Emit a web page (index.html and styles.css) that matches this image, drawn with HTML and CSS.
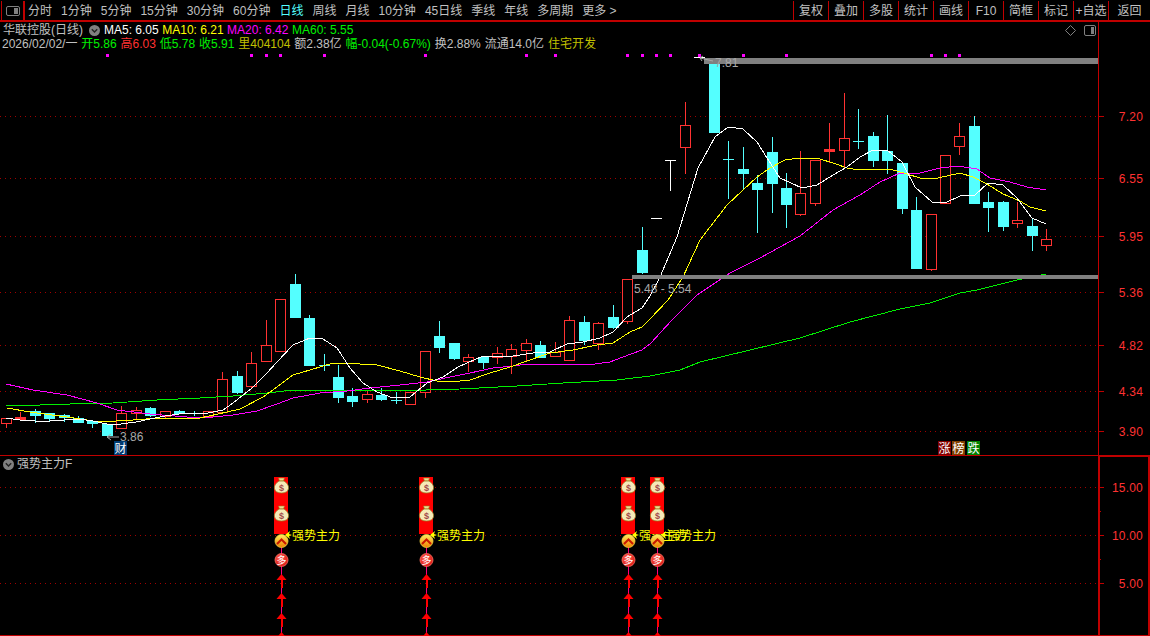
FILE: index.html
```html
<!DOCTYPE html>
<html lang="zh-CN">
<head>
<meta charset="utf-8">
<title>华联控股 (日线)</title>
<link rel="stylesheet" href="styles.css">
</head>
<body>
<div class="app">
  <header class="toolbar">
    <div class="tb-icon"><svg width="14" height="10" viewBox="0 0 14 10"><rect x="0.5" y="0.5" width="13" height="9" rx="1.5" class="ico-line"/><rect x="8" y="2" width="4" height="6" class="ico-fill"/></svg></div>
    <nav class="tb-tabs">
      <span>分时</span><span>1分钟</span><span>5分钟</span><span>15分钟</span><span>30分钟</span><span>60分钟</span><span class="active">日线</span><span>周线</span><span>月线</span><span>10分钟</span><span>45日线</span><span>季线</span><span>年线</span><span>多周期</span><span>更多 &gt;</span>
    </nav>
    <div class="tb-btns">
      <span>复权</span><span>叠加</span><span>多股</span><span>统计</span><span>画线</span><span>F10</span><span>简框</span><span>标记</span><span>+自选</span><span>返回</span>
    </div>
  </header>

  <section class="panel panel-main">
    <div class="head">
      <div class="row row-ma">
        <span class="gray name">华联控股(日线)</span>
        <svg class="chev" width="11" height="11" viewBox="0 0 11 11"><circle cx="5.5" cy="5.5" r="5.5" class="ico-fill"/><path d="M2.8 4.2 5.5 7 8.2 4.2" class="ico-dark"/></svg>
        <span class="white">MA5: 6.05</span>
        <span class="yellow">MA10: 6.21</span>
        <span class="magenta">MA20: 6.42</span>
        <span class="green">MA60: 5.55</span>
        <span class="head-icons">
          <svg width="11" height="11" viewBox="0 0 11 11"><path d="M5.5 0.5 10.5 5.5 5.5 10.5 0.5 5.5Z" class="ico-line"/></svg>
          <svg width="12" height="11" viewBox="0 0 12 11"><rect x="0.5" y="0.5" width="11" height="10" rx="1.5" class="ico-line"/><rect x="7" y="2" width="3" height="7" class="ico-fill"/></svg>
        </span>
      </div>
      <div class="row row-quote">
        <span class="gray">2026/02/02/一</span>
        <span class="green">开5.86</span>
        <span class="red">高6.03</span>
        <span class="green">低5.78</span>
        <span class="green">收5.91</span>
        <span class="olive">里404104</span>
        <span class="gray">额2.38亿</span>
        <span class="green">幅-0.04(-0.67%)</span>
        <span class="gray">换2.88%</span>
        <span class="gray">流通14.0亿</span>
        <span class="olive">住宅开发</span>
      </div>
    </div>
    <svg id="main" class="chart" width="1150" height="433" viewBox="0 22 1150 433"></svg>
  </section>

  <section class="panel panel-sub">
    <div class="sub-head">
      <svg width="11" height="11" viewBox="0 0 11 11"><circle cx="5.5" cy="5.5" r="5.5" class="ico-fill"/><path d="M2.8 4.2 5.5 7 8.2 4.2" class="ico-dark"/></svg>
      <span class="gray">强势主力F</span>
    </div>
    <svg id="sub" class="chart" width="1150" height="181" viewBox="0 455 1150 181">
      <defs>
        <linearGradient id="coinFill" x1="0" y1="0" x2="0" y2="1">
          <stop offset="0" stop-color="#fff060"/>
          <stop offset="1" stop-color="#f08000"/>
        </linearGradient>
        <radialGradient id="ballFill" cx="0.4" cy="0.35" r="0.75">
          <stop offset="0" stop-color="#ff6050"/>
          <stop offset="1" stop-color="#d81010"/>
        </radialGradient>
      </defs>
    </svg>
  </section>
</div>
<script src="app.js"></script>
</body>
</html>
```

FILE: styles.css
```css
* { box-sizing: border-box; }
html, body { margin: 0; padding: 0; background: #000; }
body { width: 1150px; height: 636px; overflow: hidden; font: 12px/14px "Liberation Sans", "Noto Sans CJK SC", sans-serif; color: #c0c0c0; }
.app { display: flex; flex-direction: column; width: 1150px; height: 636px; }

.toolbar { display: flex; align-items: stretch; height: 22px; flex: none; border-bottom: 2px solid #c00000; padding-top: 1px; }
.tb-icon { width: 24px; margin-left: 1px; border-left: 1px solid #c00000; border-right: 2px solid #c00000; display: flex; align-items: center; justify-content: center; }
.tb-tabs { display: flex; align-items: center; gap: 9px; padding-left: 3px; }
.tb-tabs .active { color: #54ffff; }
.tb-btns { margin-left: auto; width: 357px; display: flex; }
.tb-btns span { width: 35px; border-left: 1px solid #c00000; display: flex; align-items: center; justify-content: center; white-space: nowrap; }
.tb-btns span:last-child { width: 42px; }

.panel { position: relative; flex: none; }
.panel-main { height: 433px; }
.panel-sub { height: 181px; }
.chart { display: block; }

.head { position: absolute; left: 0; top: 1px; width: 1098px; }
.row { display: flex; align-items: center; height: 14px; white-space: nowrap; }
.row-ma { gap: 3.5px; padding-left: 3px; }
.row-ma .name { margin-right: 2px; }
.row-ma .chev { margin-right: 1px; }
.row-quote { gap: 3.9px; padding-left: 2px; }
.head-icons { margin-left: auto; display: flex; align-items: center; gap: 8px; padding-right: 2px; }
.sub-head { position: absolute; left: 3px; top: 2px; display: flex; align-items: center; gap: 3px; height: 14px; }

.gray { color: #c0c0c0; }
.white { color: #fff; }
.yellow { color: #ffff00; }
.magenta { color: #ff00ff; }
.green { color: #00f000; }
.red { color: #ff3232; }
.olive { color: #c0c000; }

.ico-line { fill: none; stroke: #808080; stroke-width: 1; }
.ico-fill { fill: #808080; }
.ico-dark { fill: none; stroke: #222; stroke-width: 1.4; }

.crisp { shape-rendering: crispEdges; }
.grid { stroke: #a00000; stroke-width: 1; stroke-dasharray: 1 4; }
.axis { stroke: #c00000; stroke-width: 1; }
.axis-thick { stroke: #c00000; stroke-width: 2; }
.ma { fill: none; stroke-width: 1; shape-rendering: crispEdges; }
.ma5 { stroke: #fff; }
.ma10 { stroke: #ffff00; }
.ma20 { stroke: #ff00ff; }
.ma60 { stroke: #00f000; }
.wick-r { stroke: #ff3232; }
.wick-c { stroke: #54ffff; }
.wick-w { stroke: #fff; }
.solid-r { fill: #ff3232; }
.solid-c { fill: #54ffff; }
.hollow { fill: #000; }
.dot { fill: #ff00ff; }
.band { fill: #808080; }
.note { fill: #a8a8a8; font-size: 12px; }
.arrow-note { stroke: #a8a8a8; fill: none; }
.ylabel { fill: #ff3232; font-size: 12px; text-anchor: end; letter-spacing: 0.2px; }
.badge-text { fill: #fff; font-size: 12px; text-anchor: middle; }
.bg-cai { fill: #003a70; }
.bg-zhang { fill: #800000; }
.bg-bang { fill: #804000; }
.bg-die { fill: #008000; }

.strip { fill: #ff0000; }
.stem { stroke: #ff0080; }
.up { fill: #ff0000; }
.bag { fill: #f6eab8; stroke: #9a7a20; stroke-width: 0.8; }
.bag-neck { fill: #f0dc90; stroke: #9a7a20; stroke-width: 0.6; }
.bag-sign { fill: #a04848; font-size: 9px; font-weight: bold; text-anchor: middle; }
.coin { fill: url(#coinFill); stroke: #f0d040; stroke-width: 0.8; }
.coin-mark { fill: none; stroke: #c81800; stroke-width: 2; }
.ball { fill: url(#ballFill); stroke: #ff7060; stroke-width: 0.8; }
.ball-text { fill: #fff; font-size: 10px; text-anchor: middle; }
.star { fill: #ffff00; }
.sig-text { fill: #ffff00; font-size: 12px; }
```

FILE: app.js
```js
var NS = "http://www.w3.org/2000/svg";
function el(parent, tag, attrs, text) {
  var n = document.createElementNS(NS, tag);
  for (var k in attrs) n.setAttribute(k, attrs[k]);
  if (text != null) n.textContent = text;
  parent.appendChild(n);
  return n;
}
var main = document.getElementById("main");
var sub = document.getElementById("sub");
var AX = 1098;
var cx = function (i) { return Math.floor(6.2 + 14.45 * i); };

// [high, bodyTop, bodyBottom, low, kind]  r hollow red, R solid red, c cyan, w white
var K = [
[418,418,423,428,"r"],[412,417,419,419,"R"],[409,411,415,423,"c"],[413,413,418,421,"c"],[414,415,417,422,"c"],
[416,418,422,423,"c"],[420,421,423,428,"c"],[424,424,435,435,"c"],[406,413,428,429,"r"],[407,410,413,419,"r"],
[407,408,415,417,"c"],[411,411,416,418,"r"],[410,411,413,414,"c"],[411,413,413,416,"c"],[411,411,416,416,"r"],
[372,379,412,412,"r"],[371,376,392,394,"c"],[352,363,386,388,"r"],[320,345,361,361,"r"],[299,299,351,351,"r"],
[274,284,317,317,"c"],[315,318,365,365,"c"],[354,365,365,371,"c"],[365,377,397,403,"c"],[388,396,401,407,"c"],
[391,394,399,403,"r"],[388,395,399,401,"c"],[392,400,400,404,"c"],[392,392,404,405,"r"],[351,351,392,398,"r"],
[321,336,347,353,"c"],[343,343,358,360,"c"],[354,357,361,372,"r"],[357,357,362,369,"c"],[347,353,357,364,"r"],
[344,349,356,374,"r"],[339,343,350,361,"r"],[341,345,357,357,"c"],[342,352,356,356,"r"],[316,320,360,360,"r"],
[316,322,340,345,"c"],[322,323,343,350,"r"],[305,317,327,329,"c"],[279,279,321,324,"r"],[227,250,272,274,"c"],
[218,218,218,218,"w"],[160,160,160,191,"w"],[102,125,147,174,"r"],[57,57,57,57,"w"],[58,60,132,132,"c"],
[141,159,159,199,"c"],[147,169,173,190,"c"],[175,183,189,233,"c"],[137,152,183,213,"c"],[173,188,204,228,"c"],
[151,193,214,216,"r"],[160,160,203,206,"r"],[123,149,151,163,"R"],[93,138,150,168,"r"],[109,141,141,149,"c"],
[132,136,160,167,"c"],[115,151,160,174,"c"],[163,163,208,214,"c"],[197,210,268,268,"c"],[214,214,269,271,"r"],
[155,155,203,203,"r"],[123,136,146,155,"r"],[116,126,203,203,"c"],[192,202,207,232,"c"],[201,202,226,231,"c"],
[202,220,223,228,"r"],[218,226,235,251,"c"],[229,239,245,251,"r"]
];

var MA5 = [[6,418],[20,420],[35,421],[50,421],[64,420],[78,419],[93,421],[107,424],[121,424],[136,422],[150,419],[165,416],[179,414],[194,413],[208,413],[223,410],[233,403],[252,388],[267,373],[277,362],[293,345],[310,338],[323,339],[337,348],[350,368],[363,383],[377,392],[393,398],[410,397],[427,383],[443,377],[458,367],[467,363],[483,356],[497,356],[513,356],[533,353],[550,352],[567,344],[583,342],[600,338],[613,332],[627,317],[642,308],[650,296],[660,277],[677,237],[698,168],[715,137],[728,127],[743,129],[757,142],[767,158],[780,178],[802,188],[817,185],[833,175],[847,167],[860,157],[873,150],[887,150],[902,162],[915,187],[932,202],[947,202],[960,196],[975,195],[988,183],[1003,185],[1017,198],[1032,218],[1046,224]];
var MA10 = [[7,408],[30,412],[67,417],[100,422],[133,420],[160,418],[200,418],[227,412],[240,409],[263,397],[277,387],[293,375],[310,370],[333,363],[360,364],[377,365],[400,371],[420,377],[437,381],[460,381],[470,380],[490,373],[510,367],[527,361],[550,353],[573,350],[597,345],[613,343],[630,332],[642,327],[650,319],[668,300],[683,277],[700,240],[727,205],[757,177],[770,168],[785,160],[800,158],[820,159],[833,163],[847,168],[853,169],[890,169],[907,174],[920,178],[933,179],[947,176],[960,173],[973,177],[987,184],[1003,194],[1020,201],[1030,207],[1046,211]];
var MA20 = [[6,384],[33,390],[67,395],[97,403],[117,410],[150,414],[187,417],[213,417],[233,415],[257,411],[277,404],[293,398],[320,393],[347,391],[370,388],[400,385],[427,382],[450,377],[470,373],[493,368],[513,366],[527,364],[563,364],[587,365],[610,362],[623,357],[642,350],[650,344],[672,320],[697,295],[730,273],[760,258],[800,236],[833,210],[860,195],[880,182],[900,173],[920,173],[940,168],[958,166],[977,169],[990,178],[1010,182],[1027,187],[1046,190]];
var MA60 = [[6,405],[40,405],[70,404],[113,403],[157,400],[200,398],[233,396],[267,393],[293,390],[327,390],[393,391],[460,389],[517,386],[563,383],[617,380],[650,376],[680,370],[700,362],[750,350],[800,338],[850,322],[900,309],[930,303],[960,293],[977,290],[1017,280],[1046,274]];

// grid
[[116,"7.20"],[178,"6.55"],[236,"5.95"],[292,"5.36"],[345,"4.82"],[391,"4.34"],[431,"3.90"]].forEach(function (g) {
  var y = g[0] + 0.5;
  el(main, "line", { x1: 0, x2: AX, y1: y, y2: y, "class": "grid crisp" });
  el(main, "line", { x1: AX, x2: AX + 6, y1: y, y2: y, "class": "axis crisp" });
  el(main, "text", { x: 1143, y: g[0] + 4.5, "class": "ylabel" }, g[1]);
});
el(main, "line", { x1: AX + 0.5, x2: AX + 0.5, y1: 22, y2: 455, "class": "axis crisp" });

// candles
K.forEach(function (k, i) {
  var x = cx(i), hi = k[0], top = k[1], bot = k[2], lo = k[3], t = k[4];
  var wc = t === "c" ? "wick-c" : t === "w" ? "wick-w" : "wick-r";
  if (hi < top) el(main, "line", { x1: x + 0.5, x2: x + 0.5, y1: hi, y2: top, "class": wc + " crisp" });
  if (lo > bot) el(main, "line", { x1: x + 0.5, x2: x + 0.5, y1: bot, y2: lo, "class": wc + " crisp" });
  if (top === bot) {
    el(main, "line", { x1: x - 5, x2: x + 6, y1: top + 0.5, y2: top + 0.5, "class": wc + " crisp" });
  } else if (t === "c") {
    el(main, "rect", { x: x - 5, y: top, width: 11, height: bot - top + 1, "class": "solid-c crisp" });
  } else {
    el(main, "rect", { x: x - 5, y: top, width: 11, height: bot - top + 1, "class": "solid-r crisp" });
    if (t === "r") el(main, "rect", { x: x - 4, y: top + 1, width: 9, height: bot - top - 1, "class": "hollow crisp" });
  }
});

// moving averages
[[MA60, "ma60"], [MA20, "ma20"], [MA10, "ma10"], [MA5, "ma5"]].forEach(function (m) {
  el(main, "polyline", { points: m[0].map(function (p) { return p.join(","); }).join(" "), "class": "ma " + m[1] });
});

// signal dots
[7,17,18,19,22,29,36,38,43,44,45,46,48,51,54,64,65,66].forEach(function (i) {
  el(main, "rect", { x: cx(i) - 1, y: 54, width: 3, height: 3, "class": "dot crisp" });
});

// bands and notes
el(main, "rect", { x: 704, y: 58, width: AX - 704, height: 6, "class": "band crisp" });
el(main, "rect", { x: 632, y: 275, width: AX - 632, height: 4, "class": "band crisp" });
el(main, "path", { d: "M713 61 L700 58 M700 58 L703 56 M700 58 L702 61", "class": "arrow-note" });
el(main, "text", { x: 715, y: 67, "class": "note" }, "7.81");
el(main, "text", { x: 634, y: 293, "class": "note" }, "5.48 - 5.54");
el(main, "path", { d: "M107 437 H119 M107 437 L111 434 M107 437 L111 440", "class": "arrow-note" });
el(main, "text", { x: 120, y: 441, "class": "note" }, "3.86");

// badges
[[114, 13, "bg-cai", "财"], [938, 13, "bg-zhang", "涨"], [952, 13, "bg-bang", "榜"], [967, 13, "bg-die", "跌"]].forEach(function (b) {
  el(main, "rect", { x: b[0], y: 441, width: b[1], height: 14, "class": b[2] + " crisp" });
  el(main, "text", { x: b[0] + b[1] / 2, y: 452.5, "class": "badge-text" }, b[3]);
});

// sub panel
[[487, "15.00"], [535, "10.00"], [583, "5.00"]].forEach(function (g) {
  var y = g[0] + 0.5;
  el(sub, "line", { x1: 0, x2: AX, y1: y, y2: y, "class": "grid crisp" });
  el(sub, "line", { x1: AX, x2: AX + 6, y1: y, y2: y, "class": "axis crisp" });
  el(sub, "text", { x: 1143, y: g[0] + 5, "class": "ylabel" }, g[1]);
});
[511, 559].forEach(function (y) {
  el(sub, "line", { x1: AX, x2: AX + 3, y1: y + 0.5, y2: y + 0.5, "class": "axis crisp" });
});
el(sub, "line", { x1: 0, x2: 1150, y1: 455.5, y2: 455.5, "class": "axis crisp" });
el(sub, "line", { x1: 0, x2: 1150, y1: 635.5, y2: 635.5, "class": "axis crisp" });
el(sub, "line", { x1: AX + 1, x2: AX + 1, y1: 455, y2: 636, "class": "axis-thick crisp" });
el(sub, "line", { x1: 1149, x2: 1149, y1: 455, y2: 636, "class": "axis-thick crisp" });
el(sub, "line", { x1: AX, x2: 1150, y1: 456.5, y2: 456.5, "class": "axis crisp" });

function bag(x, y) {
  el(sub, "path", { d: "M" + (x - 2.5) + " " + (y - 8) + " h6 l-1 3 h-4 z", "class": "bag-neck" });
  el(sub, "path", { d: "M" + (x - 2) + " " + (y - 5) + " h5 c3 2 5 4.5 4.5 7.5 c-0.4 3 -3 4.5 -7 4.5 c-4 0 -6.6 -1.5 -7 -4.5 c-0.5 -3 1.5 -5.5 4.5 -7.5 z", "class": "bag" });
  el(sub, "text", { x: x + 0.5, y: y + 4.5, "class": "bag-sign" }, "$");
}

function signal(x, labelX) {
  el(sub, "rect", { x: x - 7, y: 477, width: 14, height: 57, "class": "strip crisp" });
  el(sub, "line", { x1: x + 0.5, x2: x + 0.5, y1: 547, y2: 635, "class": "stem crisp" });
  bag(x, 486);
  bag(x, 514);
  [574, 593, 613, 632].forEach(function (y) {
    el(sub, "path", { d: "M" + (x + 0.5) + " " + y + " l5 6 h-10 z", "class": "up" });
    if (y < 630) el(sub, "rect", { x: x - 0.5, y: y + 6, width: 2, height: 8, "class": "up crisp" });
  });
  el(sub, "circle", { cx: x + 0.5, cy: 541, r: 6.5, "class": "coin" });
  el(sub, "path", { d: "M" + (x - 4) + " " + 544 + " l4.5 -4.5 l4.5 4.5", "class": "coin-mark" });
  el(sub, "circle", { cx: x + 0.5, cy: 560, r: 6.5, "class": "ball" });
  el(sub, "text", { x: x + 0.5, y: 564, "class": "ball-text" }, "多");
  var s = labelX - 7, c = 535;
  el(sub, "path", { d: "M" + s + " " + c + " l5 -4 l-1 3 l3 1 l-3 1 l1 3 z", "class": "star" });
  el(sub, "text", { x: labelX, y: 540, "class": "sig-text" }, "强势主力");
}
signal(281, 292);
signal(426, 437);
signal(628, 639);
signal(657, 668);
```
